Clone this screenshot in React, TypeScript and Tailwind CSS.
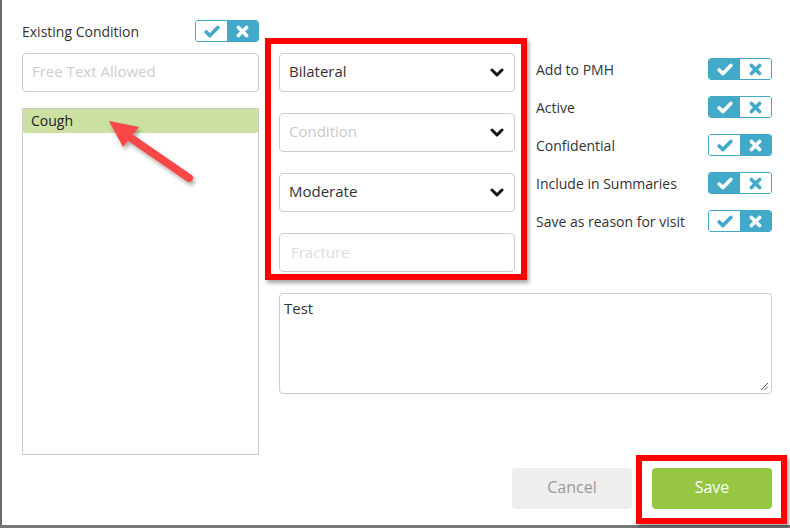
import React from "react";

const TEAL = "#43a9c9";

function CheckIcon({ color }: { color: string }) {
  return (
    <svg width="16" height="13" viewBox="0 0 16 13" aria-hidden>
      <polyline
        points="2.2,7 6,10.6 13.8,2.4"
        fill="none"
        stroke={color}
        strokeWidth="3.6"
        strokeLinecap="round"
        strokeLinejoin="round"
      />
    </svg>
  );
}

function XIcon({ color }: { color: string }) {
  return (
    <svg width="13" height="13" viewBox="0 0 13 13" aria-hidden>
      <g stroke={color} strokeWidth="3.6" strokeLinecap="round">
        <line x1="2.4" y1="2.4" x2="10.6" y2="10.6" />
        <line x1="10.6" y1="2.4" x2="2.4" y2="10.6" />
      </g>
    </svg>
  );
}

function Toggle({ on }: { on: boolean }) {
  return (
    <div className="flex h-[22px] w-[64px] overflow-hidden rounded-[3px] border border-[#43a9c9]">
      <div
        className={`flex w-[31px] items-center justify-center ${on ? "bg-[#43a9c9]" : "bg-white"}`}
      >
        <CheckIcon color={on ? "#ffffff" : TEAL} />
      </div>
      <div
        className={`flex flex-1 items-center justify-center ${on ? "bg-white" : "bg-[#43a9c9]"}`}
      >
        <XIcon color={on ? TEAL : "#ffffff"} />
      </div>
    </div>
  );
}

function Chevron() {
  return (
    <svg width="14" height="9" viewBox="0 0 14 9" aria-hidden>
      <polyline
        points="2,2 7,7 12,2"
        fill="none"
        stroke="#111"
        strokeWidth="3"
        strokeLinecap="round"
        strokeLinejoin="round"
      />
    </svg>
  );
}

function Select({ value, placeholder }: { value?: string; placeholder?: string }) {
  return (
    <div className="flex h-[39px] items-center justify-between rounded-[4px] border border-[#cccccc] bg-white pl-[9px] pr-[10px]">
      {value ? (
        <span className="pb-[3px] text-[15px] text-[#333]">{value}</span>
      ) : (
        <span className="pb-[3px] text-[15px] text-[#c9c9c9]">{placeholder}</span>
      )}
      <Chevron />
    </div>
  );
}

const rows: { label: string; on: boolean }[] = [
  { label: "Add to PMH", on: true },
  { label: "Active", on: true },
  { label: "Confidential", on: false },
  { label: "Include in Summaries", on: true },
  { label: "Save as reason for visit", on: false },
];

export default function App() {
  return (
    <div
      className="relative h-[528px] w-[790px] overflow-hidden bg-white"
      style={{ fontFamily: '"Open Sans", "Noto Sans", sans-serif' }}
    >
      <div className="absolute inset-y-0 left-0 w-[2px] bg-[#6b6b6b]" />
      <div className="absolute inset-x-0 bottom-0 h-[3px] bg-[#777]" />

      <div className="flex pl-[22px] pt-[20px]">
        {/* Left column */}
        <div className="flex w-[237px] flex-col">
          <div className="flex h-[22px] items-center justify-between">
            <span className="text-[14px] text-[#333]">Existing Condition</span>
            <Toggle on={false} />
          </div>
          <div className="mt-[11px] flex h-[39px] items-center rounded-[4px] border border-[#cccccc] pl-[9px]">
            <span className="pb-[2px] text-[15px] text-[#cdcdcd]">Free Text Allowed</span>
          </div>
          <div className="mt-[16px] h-[347px] border border-[#cccccc]">
            <div className="flex h-[24px] items-center rounded-[2px] bg-[#cbe0a1] pb-[1px] pl-[8px] text-[14px] text-[#222]">
              Cough
            </div>
          </div>
        </div>

        {/* Right area */}
        <div className="ml-[20px] flex w-[493px] flex-col">
          <div className="flex">
            <div className="mt-[33px] flex w-[236px] flex-col gap-[21px]">
              <Select value="Bilateral" />
              <Select placeholder="Condition" />
              <Select value="Moderate" />
              <div className="flex h-[39px] items-center rounded-[4px] border border-[#cccccc] pl-[11px]">
                <span className="text-[15px] text-[#dddddd]">Fracture</span>
              </div>
            </div>
            <div className="ml-[21px] mt-[38px] flex w-[236px] flex-col gap-[16px]">
              {rows.map((r) => (
                <div key={r.label} className="flex h-[22px] items-center justify-between">
                  <span className="pt-[1px] text-[14px] text-[#333]">{r.label}</span>
                  <Toggle on={r.on} />
                </div>
              ))}
            </div>
          </div>

          <div className="relative mt-[21px] h-[101px] rounded-[4px] border border-[#cccccc] px-[4px] pt-[2px]">
            <span className="text-[15px] text-[#333]">Test</span>
            <svg
              className="absolute bottom-[2px] right-[2px]"
              width="10"
              height="10"
              viewBox="0 0 10 10"
              aria-hidden
            >
              <line x1="9" y1="2" x2="2" y2="9" stroke="#555" strokeWidth="1" />
              <line x1="9" y1="5.5" x2="5.5" y2="9" stroke="#555" strokeWidth="1" />
            </svg>
          </div>

          <div className="mt-[74px] flex justify-end gap-[20px]">
            <button className="flex h-[41px] w-[120px] items-center justify-center rounded-[4px] bg-[#eeeeee] pb-[4px] text-[16px] text-[#999]">
              Cancel
            </button>
            <button className="flex h-[41px] w-[120px] items-center justify-center rounded-[4px] bg-[#97c642] pb-[4px] text-[16px] text-white">
              Save
            </button>
          </div>
        </div>
      </div>

      {/* Annotations */}
      <div className="absolute left-[265px] top-[38px] h-[242px] w-[262px] border-[6px] border-[#ff0000] shadow-[2px_3px_4px_rgba(0,0,0,0.35)]" />
      <div className="absolute left-[636px] top-[455px] h-[69px] w-[151px] border-[6px] border-[#ff0000] shadow-[2px_3px_4px_rgba(0,0,0,0.35)]" />
      <svg className="absolute left-0 top-0" width="790" height="528" aria-hidden>
        <defs>
          <filter id="sh" x="-20%" y="-20%" width="140%" height="140%">
            <feDropShadow dx="2" dy="3" stdDeviation="2" floodColor="#000" floodOpacity="0.35" />
          </filter>
        </defs>
        <g filter="url(#sh)" fill="#f84646">
          <line x1="189" y1="178" x2="125" y2="134" stroke="#f84646" strokeWidth="8" strokeLinecap="round" />
          <polygon points="109,121 139,127 123,147" />
        </g>
      </svg>
    </div>
  );
}
